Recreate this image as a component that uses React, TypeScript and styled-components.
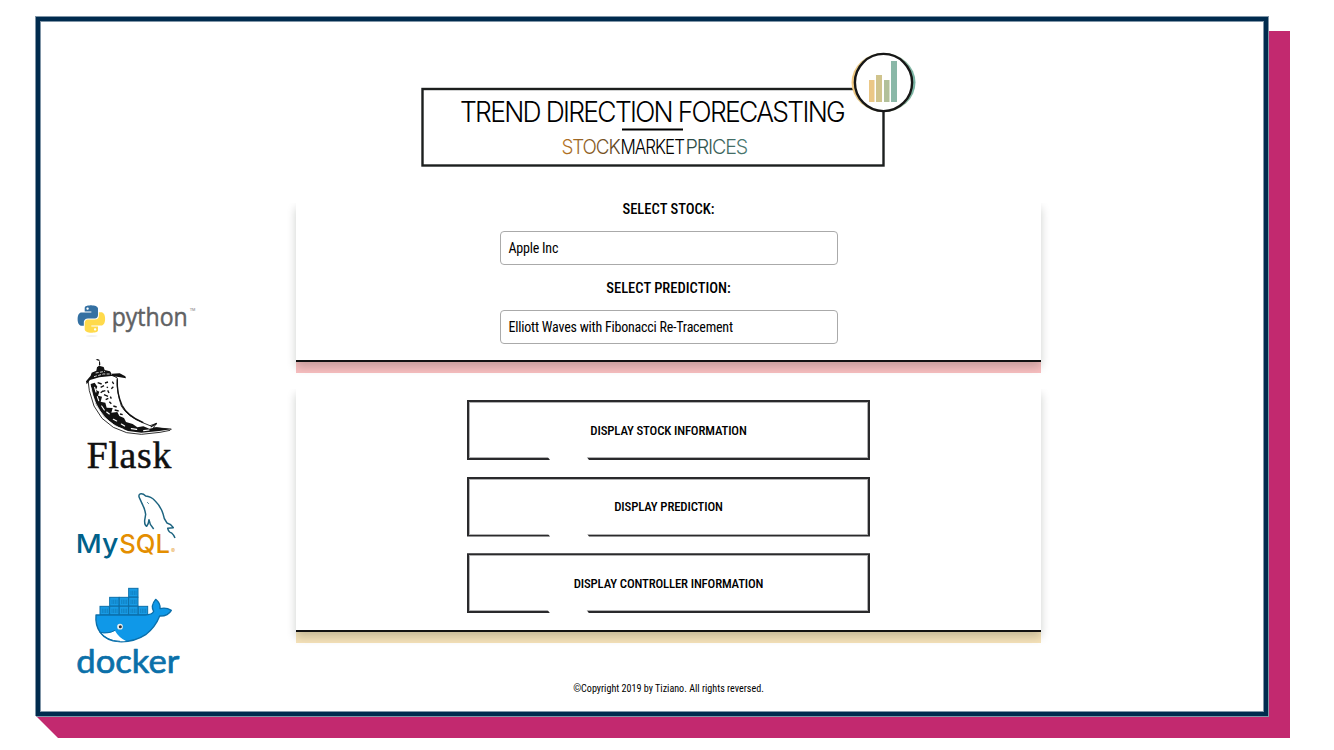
import React from 'react';
import styled, { createGlobalStyle } from 'styled-components';

const Global = createGlobalStyle`
  *, *::before, *::after { box-sizing: border-box; }
  body { margin: 0; background: #fff; font-family: Roboto, "Liberation Sans", sans-serif; color: #000; }
`;

const Page = styled.div`
  width: 1334px;
  height: 750px;
  padding: 17px 44px 12px 36px;
  overflow: hidden;
`;

const Backdrop = styled.div`
  width: 1254px;
  height: 721px;
  background: #c2296f;
  clip-path: polygon(-1px -1px, 1233px -1px, 1233px 14px, 1254px 14px, 1254px 721px, 22px 721px, 0 699px, -1px 699px);
`;

const Frame = styled.div`
  width: 1232px;
  height: 699px;
  border: 4px solid #002b4e;
  box-shadow: 0 0 0 1px #8095a7, inset 0 0 0 1px #8095a7;
  background: #fff;
  display: flex;
`;

const Tools = styled.aside`
  width: 256px;
  flex: none;
  padding: 269px 0 0 20px;
  display: flex;
  flex-direction: column;
`;

const Main = styled.main`
  width: 745px;
  flex: none;
  display: flex;
  flex-direction: column;
  align-items: center;
`;

const Art = styled.svg<{ $w: number; $h: number }>`
  display: block;
  flex: none;
  width: ${p => p.$w}px;
  height: ${p => p.$h}px;
  overflow: visible;
`;

const Banner = styled.header`
  height: 159px;
  margin-left: -17px;
  padding-top: 19px;
`;

const Panel = styled.section<{ $accent: string; $height: number; $top: number; $fade: number }>`
  width: 745px;
  height: ${p => p.$height}px;
  margin-bottom: 13px;
  padding-top: ${p => p.$top}px;
  border-bottom: 2px solid #111;
  display: flex;
  flex-direction: column;
  align-items: center;
  flex: none;
  position: relative;
  &::before {
    content: "";
    position: absolute;
    inset: ${p => p.$fade}px 0 -2px;
    box-shadow: 0 5px 9px rgba(0, 20, 10, 0.2);
    z-index: 1;
    clip-path: polygon(-16px 0, 0 0, 0 100%, 100% 100%, 100% 0, 761px 0, 761px calc(100% + 18px), -16px calc(100% + 18px));
  }
  &::after {
    content: "";
    position: absolute;
    left: 0;
    right: 0;
    top: calc(100% + 2px);
    height: 11px;
    background: ${p => p.$accent};
  }
`;

const Label = styled.label`
  font-size: 14.6px;
  font-weight: 500;
  font-stretch: 75%;
  line-height: 20px;
`;

const Select = styled.div`
  width: 338px;
  height: 34px;
  margin: 12px 0 13px;
  padding-left: 8px;
  border: 1px solid #aaa;
  border-radius: 4px;
  font-size: 14px;
  font-stretch: 75%;
  letter-spacing: -0.22px;
  line-height: 32px;
`;

const Action = styled.button`
  width: 403px;
  height: 60px;
  margin: 0 0 16.6px;
  padding: 0;
  flex: none;
  border: 2px solid #2a2a2c;
  box-shadow: inset 0 0 0 1px #b0b0b1;
  background: #fff;
  font: 500 12.8px Roboto, sans-serif;
  font-stretch: 75%;
  letter-spacing: -0.15px;
  color: #000;
  clip-path: polygon(0 0, 100% 0, 100% 100%, 122px 100%, 119px 56px, 80px 56px, 83px 100%, 0 100%);
`;

const Copyright = styled.footer`
  margin-top: 37px;
  font-size: 10.1px;
  font-weight: 450;
  font-stretch: 75%;
  line-height: 14px;
`;

const pythonHalf =
  'M14.25.18l.9.2.73.26.59.3.45.32.34.34.25.34.16.33.1.3.04.26.02.2-.01.13V8.5l-.05.63-.13.55-.21.46-.26.38-.3.31-.33.25-.35.19-.35.14-.33.1-.3.07-.26.04-.21.02H8.77l-.69.05-.59.14-.5.22-.41.27-.33.32-.27.35-.2.36-.15.37-.1.35-.07.32-.04.27-.02.21v3.06H3.17l-.21-.03-.28-.07-.32-.12-.35-.18-.36-.26-.36-.36-.35-.46-.32-.59-.28-.73-.21-.88-.14-1.05-.05-1.23.06-1.22.16-1.04.24-.87.32-.71.36-.57.4-.44.42-.33.42-.24.4-.16.36-.1.32-.05.24-.01h.16l.06.01h8.16v-.83H6.18l-.01-2.75-.02-.37.05-.34.11-.31.17-.28.25-.26.31-.23.38-.2.44-.18.51-.15.58-.12.64-.1.71-.06.77-.04.84-.02 1.27.05zm-6.3 1.98l-.23.33-.08.41.08.41.23.34.33.22.41.09.41-.09.33-.22.23-.34.08-.41-.08-.41-.23-.33-.33-.22-.41-.09-.41.09z';

const PythonLogo = () => (
  <Art $w={150} $h={60} viewBox="0 0 450 180">
    <ellipse cx="95" cy="138" rx="18" ry="2" fill="#eee" />
    <g transform="translate(53 46) scale(3.42)">
      <path d={pythonHalf} fill="#3470a2" />
      <path d={pythonHalf} fill="#ffda4b" transform="rotate(180 12 12)" />
    </g>
    <text x="155" y="108" fontFamily="Open Sans" fontSize="78" fill="#606163" stroke="#606163" strokeWidth="1.5" textLength="228" lengthAdjust="spacingAndGlyphs">python</text>
    <text x="389" y="62" fontFamily="Liberation Sans" fontSize="11" fill="#777" textLength="17" lengthAdjust="spacingAndGlyphs">TM</text>
  </Art>
);

const FlaskLogo = () => (
  <Art $w={150} $h={130} viewBox="0 0 450 390">
    <path d="M84 90L96 78 150 72 172 84Q168 120 184 168 200 198 248 218L270 227 290 220 280 233 334 237 330 241 300 247 244 253 200 248 160 232 126 205 102 168 88 122z" fill="#fff" stroke="#111" strokeWidth="2.6" strokeLinejoin="round" />
    <path d="M107 29l6-2 6 3-2 6v11l14 4 3 9 16 4 5 7 24-1 17 9 2 6-22-4-22-3-36 4-28 8-10 13-2-9 14-17 3-9 14-6 2-10 10-8-1-10z" fill="#111" />
    <path d="M102 80l28-8 26 0M107 69l28-5" fill="none" stroke="#fff" strokeWidth="2.4" strokeDasharray="9 4" />
    <path d="M92 102L104 98 112 110 108 120 118 125 114 137 126 140 122 155 136 158 140 173 158 174 154 188 172 186 178 198 192 204 198 216 218 222 232 232 250 229 268 236 290 232 332 238 298 243 244 248 204 243 166 227 132 200 108 164 95 122z" fill="#111" />
    <path d="M93 112q8 52 42 90 24 26 56 36" fill="none" stroke="#fff" strokeWidth="2.2" />
    <path d="M104 112l4 14M112 140l4 12M125 168l8 12M148 192l-8-6M160 208l10 5M184 222l10 6M214 236l16 2M251 242l16-2" fill="none" stroke="#fff" strokeWidth="3.4" strokeLinecap="round" />
    <path d="M113 98l12 4M122 112l10-5M135 99l9-3M130 122l-8 6M132 134l12 5M143 121l4 8M154 116l6-6M137 149l8-4M148 155l6 6M160 168l10 3M164 180l12 3M126 125l10-3M180 192l8 2M157 95l4 7M140 111l4 2M151 140l3 6" fill="none" stroke="#111" strokeWidth="4" />
    <path d="M172 88q-2 42 14 78 16 32 64 52M272 231l18-11" fill="none" stroke="#111" strokeWidth="4" />
    <text x="80" y="353" fontFamily="Liberation Serif" fontSize="113" fill="#111" stroke="#111" strokeWidth="1.5" textLength="254" lengthAdjust="spacing">Flask</text>
  </Art>
);

const MysqlLogo = () => (
  <Art $w={150} $h={90} viewBox="0 0 450 270">
    <g transform="translate(2 0)" fill="none" stroke="#1d6480" strokeLinejoin="round">
      <path d="M279 147l-10-14-4-14q-1 12-7 20-7-3-6-18l3-18q-2-14-8-26l-10-22q-5-9 1-13 8-3 17 6 16 1 28 14 16 15 24 39 2 16 12 28 12 3 19 14l-17 2q3 12 12 14 6 5 10 15" strokeWidth="4.4" />
      <path d="M260 67l4 4" strokeWidth="3" />
    </g>
    <text x="47" y="219" fontFamily="Inter" fontSize="78" fontWeight="550" fill="#00618a" textLength="128" lengthAdjust="spacingAndGlyphs">My</text>
    <text x="178" y="219" fontFamily="Inter" fontSize="78" fontWeight="550" fill="#e48e00" textLength="152" lengthAdjust="spacingAndGlyphs">SQL</text>
    <text x="333" y="219" fontFamily="Inter" fontSize="18" fill="#e9a840">®</text>
  </Art>
);

const crates = [[206, 25], [149, 52], [178, 52], [206, 52], [120, 79], [149, 79], [178, 79], [206, 79], [235, 79]];

const DockerLogo = () => (
  <Art $w={150} $h={100} viewBox="0 0 450 300">
    <g stroke="#0b6faa" strokeWidth="3">
      {crates.map(([x, y]) => (
        <g key={`${x}-${y}`}>
          <rect x={x} y={y} width="28" height="26" fill="#189be5" />
          <path d={`M${x + 7} ${y + 7}v13m5-13v13m5-13v13m5-13v13`} strokeWidth="1.6" />
        </g>
      ))}
      <path d="M108 105h147q22 0 26-11-10-17 6-36 15 12 13 28 18-5 34 5-10 18-35 17-13 34-42 56-35 23-80 21-38-2-56-27-16-22-13-53z" fill="#0f98e8" strokeLinejoin="round" strokeWidth="4" />
    </g>
    <path d="M124 159q22 4 41-7 11 20 33 31-18 2-35-1-21-6-39-23z" fill="#fff" />
    <path d="M119 157q27 5 46-6M120 156q18 26 60 28" fill="none" stroke="#0b6faa" strokeWidth="3" />
    <circle cx="180" cy="140" r="8.5" fill="#e9eeee" />
    <circle cx="181" cy="140" r="4.5" fill="#333" />
    <text x="49" y="279" fontFamily="Lato" fontSize="96" fontWeight="400" fill="#0b70a9" stroke="#0b70a9" strokeWidth="2" strokeLinejoin="round" textLength="309" lengthAdjust="spacingAndGlyphs">docker</text>
  </Art>
);

const BrandBanner = () => (
  <Art $w={500} $h={130} viewBox="410 40 500 130">
    <defs>
      <linearGradient id="gold"><stop stopColor="#b87526" /><stop offset="1" stopColor="#5a4120" /></linearGradient>
      <linearGradient id="green"><stop stopColor="#27443f" /><stop offset="1" stopColor="#4c7a72" /></linearGradient>
      <linearGradient id="ring"><stop stopColor="#f4ca82" /><stop offset=".5" stopColor="#b8c094" /><stop offset="1" stopColor="#76b4a5" /></linearGradient>
    </defs>
    <rect x="422.5" y="89" width="461" height="76.5" fill="#fff" stroke="#1c1f1e" strokeWidth="2.4" />
    <text x="460" y="122" fontFamily="Inter" fontSize="28" fontWeight="270" letterSpacing="-1.8" textLength="384" lengthAdjust="spacingAndGlyphs">TREND DIRECTION FORECASTING</text>
    <path d="M622 129.5h61" stroke="#000" strokeWidth="2.2" />
    <g fontFamily="Inter" fontSize="20.5" fontWeight="270" letterSpacing="-1.2">
      <text x="561.5" y="153.5" fill="url(#gold)" textLength="58" lengthAdjust="spacingAndGlyphs">STOCK</text>
      <text x="620.5" y="153.5" textLength="63.5" lengthAdjust="spacingAndGlyphs">MARKET</text>
      <text x="685.5" y="153.5" fill="url(#green)" textLength="61.5" lengthAdjust="spacingAndGlyphs">PRICES</text>
    </g>
    <ellipse cx="883.5" cy="82.5" rx="32" ry="29.5" fill="url(#ring)" />
    <circle cx="883.5" cy="82.5" r="28.6" fill="#fff" stroke="#171717" strokeWidth="2.4" />
    <path d="M869 80h5.5v22H869z" fill="#ebc786" />
    <path d="M876 75h6v27h-6z" fill="#d0c48d" />
    <path d="M884 80h5.5v22H884z" fill="#b2c09a" />
    <path d="M891 61h6v41h-6z" fill="#8bb8a8" />
  </Art>
);

const Slot = styled.div<{ $h: number }>`
  height: ${p => p.$h}px;
  flex: none;
`;

export default function App() {
  return (
    <>
      <Global />
      <Page>
        <Backdrop>
          <Frame>
            <Tools>
              <Slot $h={60}><PythonLogo /></Slot>
              <Slot $h={130}><FlaskLogo /></Slot>
              <Slot $h={100}><MysqlLogo /></Slot>
              <Slot $h={100}><DockerLogo /></Slot>
            </Tools>
            <Main>
              <Banner><BrandBanner /></Banner>
              <Panel $accent="#f8bfc0" $height={182} $top={19} $fade={23}>
                <Label>SELECT STOCK:</Label>
                <Select>Apple Inc</Select>
                <Label>SELECT PREDICTION:</Label>
                <Select>Elliott Waves with Fibonacci Re-Tracement</Select>
              </Panel>
              <Panel $accent="#f6e3ba" $height={257} $top={25} $fade={14}>
                <Action>DISPLAY STOCK INFORMATION</Action>
                <Action>DISPLAY PREDICTION</Action>
                <Action>DISPLAY CONTROLLER INFORMATION</Action>
              </Panel>
              <Copyright>©Copyright 2019 by Tiziano. All rights reversed.</Copyright>
            </Main>
          </Frame>
        </Backdrop>
      </Page>
    </>
  );
}
